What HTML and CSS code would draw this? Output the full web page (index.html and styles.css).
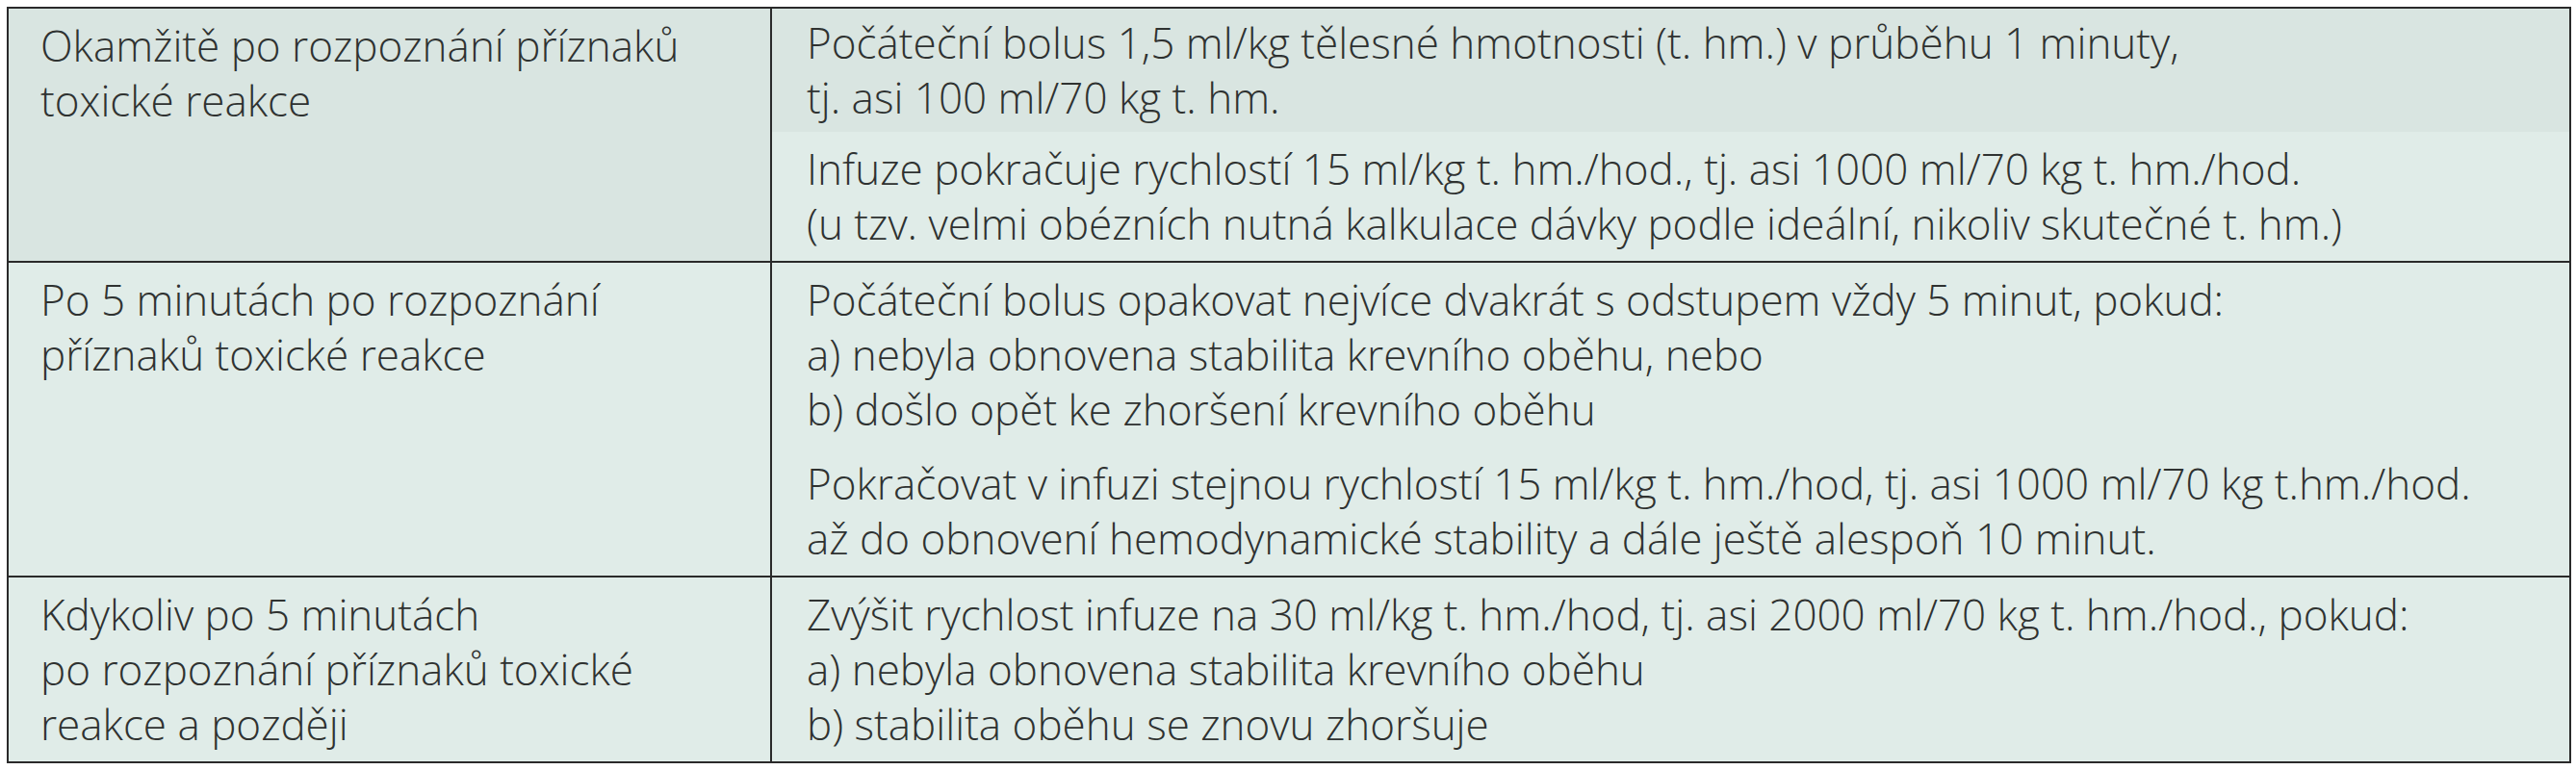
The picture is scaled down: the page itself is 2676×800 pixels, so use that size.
FILE: index.html
```html
<!DOCTYPE html>
<html lang="cs">
<head>
<meta charset="utf-8">
<title>Dávkování lipidové emulze</title>
<link rel="stylesheet" href="styles.css">
</head>
<body>
<table class="dose">
  <colgroup><col class="c-when"><col class="c-what"></colgroup>
  <tbody class="grp">
    <tr class="dark">
      <td class="when" rowspan="2">Okamžitě po rozpoznání příznaků<br>toxické reakce</td>
      <td class="what first">Počáteční bolus 1,5 ml/kg tělesné hmotnosti (t. hm.) v průběhu 1 minuty,<br>tj. asi 100 ml/70 kg t. hm.</td>
    </tr>
    <tr>
      <td class="what">Infuze pokračuje rychlostí 15 ml/kg t. hm./hod., tj. asi 1000 ml/70 kg t. hm./hod.<br>(u tzv. velmi obézních nutná kalkulace dávky podle ideální, nikoliv skutečné t. hm.)</td>
    </tr>
  </tbody>
  <tbody class="grp">
    <tr>
      <td class="when" rowspan="2">Po 5 minutách po rozpoznání<br>příznaků toxické reakce</td>
      <td class="what">Počáteční bolus opakovat nejvíce dvakrát s odstupem vždy 5 minut, pokud:<br>a) nebyla obnovena stabilita krevního oběhu, nebo<br>b) došlo opět ke zhoršení krevního oběhu</td>
    </tr>
    <tr>
      <td class="what">Pokračovat v infuzi stejnou rychlostí 15 ml/kg t. hm./hod, tj. asi 1000 ml/70 kg t.hm./hod.<br>až do obnovení hemodynamické stability a dále ještě alespoň 10 minut.</td>
    </tr>
  </tbody>
  <tbody class="grp">
    <tr>
      <td class="when">Kdykoliv po 5 minutách<br>po rozpoznání příznaků toxické<br>reakce a později</td>
      <td class="what">Zvýšit rychlost infuze na 30 ml/kg t. hm./hod, tj. asi 2000 ml/70 kg t. hm./hod., pokud:<br>a) nebyla obnovena stabilita krevního oběhu<br>b) stabilita oběhu se znovu zhoršuje</td>
    </tr>
  </tbody>
</table>
</body>
</html>
```
FILE: styles.css
```css
html, body {
  margin: 0;
  padding: 0;
  background: #ffffff;
}
body {
  padding: 7px 5px 0 7px;
}
.dose {
  width: 2664px;
  border-collapse: collapse;
  table-layout: fixed;
  border: 2px solid #2a2a2a;
  font-family: "Open Sans", "Noto Sans", sans-serif;
  font-weight: 300;
  font-size: 44px;
  line-height: 57px;
  color: #2f3231;
  background: #e0ece8;
}
.c-when { width: 793px; }
.c-what { width: auto; }
.grp { border-top: 2px solid #2a2a2a; }
td {
  vertical-align: top;
  white-space: nowrap;
  padding: 10px 20px 10px 36px;
}
td.when {
  padding-left: 33px;
  border-right: 2px solid #2a2a2a;
}
td.first { padding-top: 7px; padding-bottom: 7px; }
.dark td { background: #d9e5e1; }
```
